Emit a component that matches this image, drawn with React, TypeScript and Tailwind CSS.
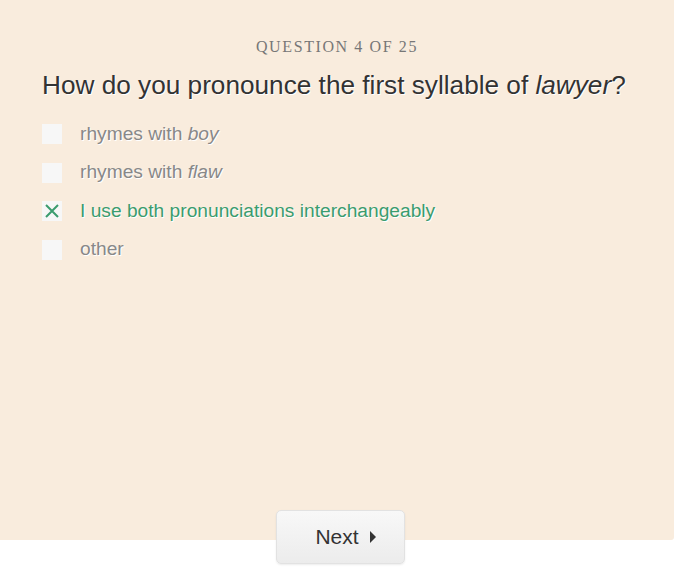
const options = [
  { id: 'boy', label: 'rhymes with ', word: 'boy', selected: false },
  { id: 'flaw', label: 'rhymes with ', word: 'flaw', selected: false },
  { id: 'both', label: 'I use both pronunciations interchangeably', word: '', selected: true },
  { id: 'other', label: 'other', word: '', selected: false },
];

export default function App() {
  return (
    <div className="w-[675px] h-[578px] bg-white font-['Liberation_Sans',Arial,sans-serif]">
      <div className="w-[674px] h-[540px] bg-[#f9ecdd] rounded-br-[3px] pt-[35px] px-[42px]">
        <div className="text-center font-['Liberation_Serif',serif] text-[16px] tracking-[1.6px] text-[#777] uppercase">
          Question 4 of 25
        </div>
        <h1 className="mt-[9px] text-[26.2px] leading-[34px] text-[#333] [text-shadow:1px_1px_0_#fff]">
          How do you pronounce the first syllable of <i>lawyer</i>?
        </h1>
        <ul className="mt-[22px] flex flex-col gap-[18.5px]">
          {options.map((o) => (
            <li key={o.id} className="flex items-center gap-[18px] h-[20px]">
              <span className="w-[20px] h-[20px] bg-[#f7f7f7] flex items-center justify-center shrink-0">
                {o.selected && (
                  <svg width="16" height="16" viewBox="0 0 16 16" fill="none" stroke="#3b9c6e" strokeWidth="2">
                    <path d="M2 2 L14 14 M14 2 L2 14" />
                  </svg>
                )}
              </span>
              <span
                className={
                  'text-[19.2px] [text-shadow:1px_1px_0_#fff] ' +
                  (o.selected ? 'text-[#3b9c6e]' : 'text-[#888]')
                }
              >
                {o.label}
                {o.word && <i>{o.word}</i>}
              </span>
            </li>
          ))}
        </ul>
      </div>
      <div className="flex justify-center -mt-[30px] pl-[6px]">
        <button className="w-[129px] h-[54px] pl-[10px] rounded-[5px] border border-[#e2e2e2] bg-gradient-to-b from-[#f8f8f8] to-[#ececec] shadow-[0_1px_2px_rgba(0,0,0,0.08)] flex items-center justify-center gap-[11px] text-[21px] text-[#333]">
          Next
          <svg width="6" height="12" viewBox="0 0 6 12" fill="#333">
            <path d="M0 0 L6 6 L0 12 Z" />
          </svg>
        </button>
      </div>
    </div>
  );
}
